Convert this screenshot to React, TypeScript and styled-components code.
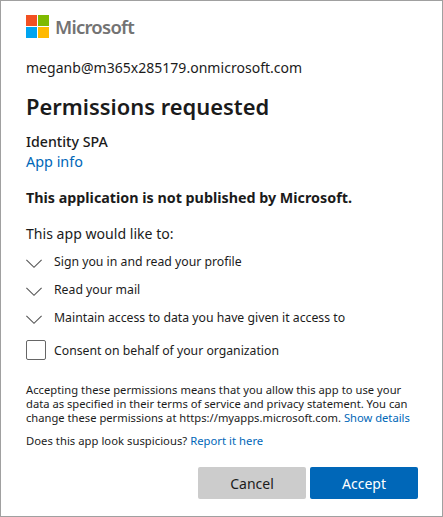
import React from 'react';
import styled, { createGlobalStyle } from 'styled-components';

const GlobalStyle = createGlobalStyle`
  *, *::before, *::after { box-sizing: border-box; }
  body { margin: 0; background: #fff; }
`;

const Dialog = styled.main`
  display: flex;
  flex-direction: column;
  width: 443px;
  height: 517px;
  padding: 14px 24px 17px 25px;
  border: 1px solid #a0a0a0;
  background: #fff;
  color: #1b1b1b;
  font-family: 'Noto Sans', 'Open Sans', sans-serif;
  font-size: 14px;
  line-height: 20px;
  white-space: nowrap;
`;

const Brand = styled.div`
  display: flex;
  align-items: center;
  gap: 6px;
  height: 23px;
`;

const BrandName = styled.span`
  color: #737373;
  font-size: 18.5px;
  font-weight: 600;
  line-height: 23px;
  letter-spacing: -0.75px;
`;

const Account = styled.div`
  margin-top: 20px;
  letter-spacing: 0.03px;
`;

const Title = styled.h1`
  margin: 15px 0 0;
  font-size: 21.9px;
  font-weight: 600;
  line-height: 28px;
`;

const AppName = styled.div`
  margin-top: 11px;
  font-size: 14.2px;
  font-weight: 500;
`;

const Link = styled.a`
  color: #0067b8;
  text-decoration: none;
`;

const AppInfo = styled(Link)`
  font-size: 14.4px;
`;

const Notice = styled.p`
  margin: 16px 0 0;
  font-size: 14.3px;
  font-weight: 700;
`;

const Lead = styled.p`
  margin: 16px 0 0;
  font-size: 14.1px;
`;

const ScopeList = styled.ul`
  margin: 4px 0 0;
  padding: 0;
  list-style: none;
`;

const Scope = styled.li`
  display: flex;
  align-items: center;
  gap: 12px;
  height: 28px;
  font-size: 12.25px;

  svg { margin-top: 4px; }
`;

const Consent = styled.label`
  display: flex;
  align-items: center;
  gap: 8px;
  margin-top: 8px;
  font-size: 12.24px;
  line-height: 22px;
  height: 20px;

  span { padding-top: 2px; }
`;

const Checkbox = styled.input`
  appearance: none;
  width: 20px;
  height: 20px;
  margin: 0;
  border: 1px solid #666;
  border-radius: 2px;
  background: #fff;
`;

const Terms = styled.p`
  margin: 23px 0 0;
  font-size: 11.2px;
  line-height: 14px;
`;

const TermsLine = styled.span<{ $tracking?: number }>`
  display: block;
  letter-spacing: ${(p) => p.$tracking ?? 0}px;
`;

const Report = styled.p`
  margin: 9px 0 0;
  font-size: 11.25px;
  line-height: 14px;
  letter-spacing: 0.03px;
`;

const Actions = styled.div`
  display: flex;
  justify-content: flex-end;
  gap: 4px;
  margin-top: auto;
`;

const Button = styled.button<{ $primary?: boolean }>`
  width: 108px;
  height: 32px;
  padding: 1px 0 0;
  border: 0;
  border-radius: 2px;
  background: ${(p) => (p.$primary ? '#0067b8' : '#ccc')};
  color: ${(p) => (p.$primary ? '#fff' : '#1b1b1b')};
  font: inherit;
`;

const Logo = () => (
  <svg width="23" height="23" viewBox="0 0 23 23">
    <path fill="#f25022" d="M0 0h11v11H0z" />
    <path fill="#7fba00" d="M12 0h11v11H12z" />
    <path fill="#00a4ef" d="M0 12h11v11H0z" />
    <path fill="#ffb900" d="M12 12h11v11H12z" />
  </svg>
);

const Chevron = () => (
  <svg width="16" height="10" viewBox="0 0 16 10" fill="none" stroke="#555" strokeWidth="1.1">
    <path d="M.4 .8 8 8.3 15.6 .8" />
  </svg>
);

const scopes = [
  'Sign you in and read your profile',
  'Read your mail',
  'Maintain access to data you have given it access to',
];

export default function App() {
  return (
    <Dialog>
      <GlobalStyle />
      <Brand>
        <Logo />
        <BrandName>Microsoft</BrandName>
      </Brand>
      <Account>meganb@m365x285179.onmicrosoft.com</Account>
      <Title>Permissions requested</Title>
      <AppName>Identity SPA</AppName>
      <AppInfo>App info</AppInfo>
      <Notice>This application is not published by Microsoft.</Notice>
      <Lead>This app would like to:</Lead>
      <ScopeList>
        {scopes.map((scope) => (
          <Scope key={scope}>
            <Chevron />
            {scope}
          </Scope>
        ))}
      </ScopeList>
      <Consent>
        <Checkbox type="checkbox" />
        <span>Consent on behalf of your organization</span>
      </Consent>
      <Terms>
        <TermsLine $tracking={0.04}>
          Accepting these permissions means that you allow this app to use your
        </TermsLine>
        <TermsLine>
          data as specified in their terms of service and privacy statement. You can
        </TermsLine>
        <TermsLine>
          change these permissions at https://myapps.microsoft.com. <Link>Show details</Link>
        </TermsLine>
      </Terms>
      <Report>
        Does this app look suspicious? <Link>Report it here</Link>
      </Report>
      <Actions>
        <Button>Cancel</Button>
        <Button $primary>Accept</Button>
      </Actions>
    </Dialog>
  );
}
